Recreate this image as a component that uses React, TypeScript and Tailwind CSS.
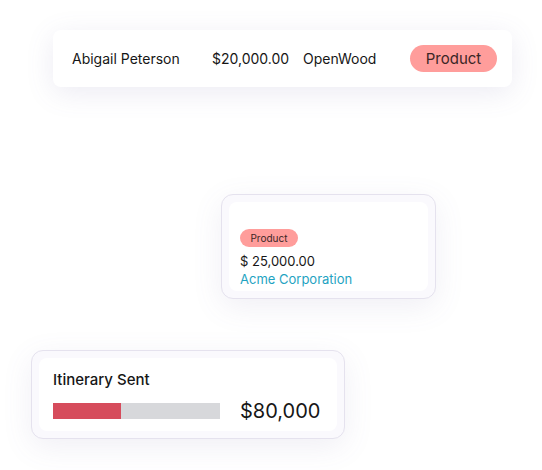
import React from 'react';

const font = { fontFamily: 'Inter, "Open Sans", sans-serif' };

function Badge({ small }: { small?: boolean }) {
  if (small) {
    return (
      <span className="flex items-center justify-center w-[58px] h-[18px] rounded-full bg-[#ff9d9b] text-[10px] leading-none text-[#3b2626]">
        Product
      </span>
    );
  }
  return (
    <span className="flex items-center justify-center w-[87px] h-[27px] rounded-full bg-[#ff9d9b] text-[15px] leading-none text-[#3b2626]">
      Product
    </span>
  );
}

export default function App() {
  return (
    <div className="w-[542px] h-[470px] bg-white flex flex-col overflow-hidden text-[#161616]" style={font}>
      {/* deal row */}
      <div className="ml-[53px] mt-[30px] w-[459px] h-[57px] rounded-lg bg-white shadow-[0_6px_28px_rgba(110,100,160,0.13)] flex items-center pl-[19px] pr-[15px] text-[14px]">
        <span className="w-[140px]">Abigail Peterson</span>
        <span className="w-[91px]">$20,000.00</span>
        <span className="flex-1">OpenWood</span>
        <Badge />
      </div>

      {/* pipeline card */}
      <div className="ml-[221px] mt-[107px] w-[215px] h-[105px] rounded-xl border border-[#e5e2ee] bg-[#faf9fd] p-[7px] shadow-[0_8px_30px_rgba(110,100,160,0.10)]">
        <div className="h-full rounded-lg bg-white pl-[11px] pt-[27px] flex flex-col items-start">
          <Badge small />
          <div className="mt-[6px] text-[13px] leading-[16px]">$ 25,000.00</div>
          <div className="mt-[2px] text-[13px] leading-[16px] text-[#1fa3c2]">Acme Corporation</div>
        </div>
      </div>

      {/* stage card */}
      <div className="ml-[31px] mt-[51px] w-[314px] h-[89px] rounded-xl border border-[#e5e2ee] bg-[#faf9fd] p-[7px] shadow-[0_8px_30px_rgba(110,100,160,0.10)]">
        <div className="h-full rounded-lg bg-white pl-[14px] pt-[12px]">
          <div className="text-[15px] leading-[20px] font-medium">Itinerary Sent</div>
          <div className="mt-[11px] flex items-center">
            <div className="w-[167px] h-[16px] bg-[#d7d8db] flex">
              <div className="w-[68px] h-full bg-[#d64c5c]" />
            </div>
            <span className="ml-[20px] text-[20px] leading-[20px]">$80,000</span>
          </div>
        </div>
      </div>
    </div>
  );
}
